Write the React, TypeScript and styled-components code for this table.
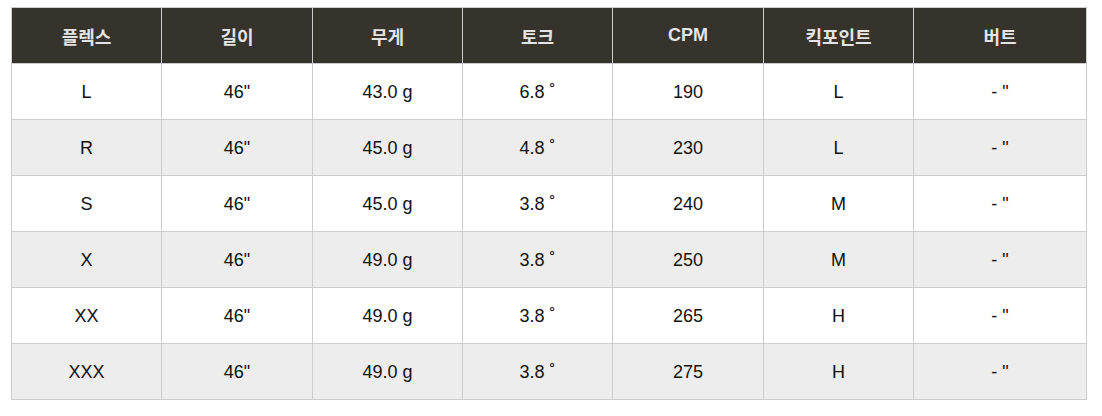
import React from "react";
import styled, { createGlobalStyle } from "styled-components";

const GlobalStyle = createGlobalStyle`
  html, body { margin: 0; padding: 0; background: #ffffff; }
  body { font-family: "Liberation Sans", Arial, "Noto Sans CJK KR", sans-serif; }
`;

const Wrapper = styled.div`
  padding: 7px 0 0 11px;
`;

const Table = styled.table`
  width: 1075px;
  border-collapse: collapse;
  table-layout: fixed;
  font-family: "Liberation Sans", Arial, "Noto Sans CJK KR", sans-serif;
  font-size: 18px;
  border: 1px solid #cccccc;
`;

const HeadCell = styled.th`
  height: 55px;
  padding: 0;
  background: #35332c;
  color: #e4e4e4;
  font-weight: bold;
  text-align: center;
  vertical-align: middle;
  border: 1px solid #cccccc;
`;

const Row = styled.tr<{ $alt: boolean }>`
  background: ${(p) => (p.$alt ? "#eeeded" : "#ffffff")};
`;

const Cell = styled.td`
  height: 54px;
  padding: 1px 0 0;
  color: #111111;
  text-align: center;
  vertical-align: middle;
  border: 1px solid #cccccc;
`;

const headers = ["플렉스", "길이", "무게", "토크", "CPM", "킥포인트", "버트"];
const widths = [150, 151, 150, 150, 151, 150, 173];

const rows = [
  ["L", "46\"", "43.0 g", "6.8 ˚", "190", "L", "- \""],
  ["R", "46\"", "45.0 g", "4.8 ˚", "230", "L", "- \""],
  ["S", "46\"", "45.0 g", "3.8 ˚", "240", "M", "- \""],
  ["X", "46\"", "49.0 g", "3.8 ˚", "250", "M", "- \""],
  ["XX", "46\"", "49.0 g", "3.8 ˚", "265", "H", "- \""],
  ["XXX", "46\"", "49.0 g", "3.8 ˚", "275", "H", "- \""],
];

export default function App() {
  return (
    <>
      <GlobalStyle />
      <Wrapper>
        <Table>
          <colgroup>
            {widths.map((w, i) => (
              <col key={i} style={{ width: w }} />
            ))}
          </colgroup>
          <thead>
            <tr>
              {headers.map((h) => (
                <HeadCell key={h}>{h}</HeadCell>
              ))}
            </tr>
          </thead>
          <tbody>
            {rows.map((r, i) => (
              <Row key={i} $alt={i % 2 === 1}>
                {r.map((c, j) => (
                  <Cell key={j}>{c}</Cell>
                ))}
              </Row>
            ))}
          </tbody>
        </Table>
      </Wrapper>
    </>
  );
}
